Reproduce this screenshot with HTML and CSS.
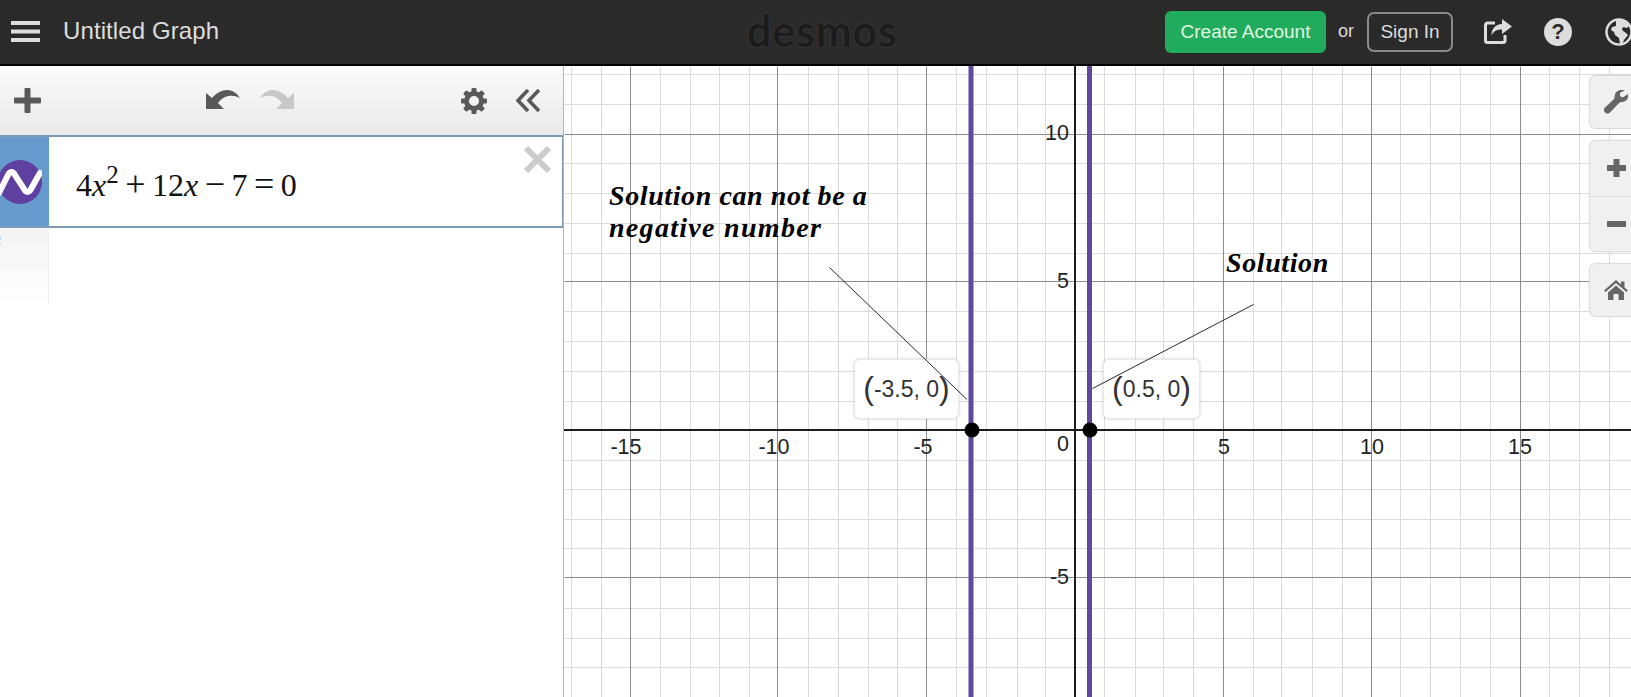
FILE: index.html
```html
<!DOCTYPE html>
<html lang="en">
<head>
<meta charset="utf-8">
<title>Untitled Graph - Desmos</title>
<link rel="stylesheet" href="styles.css">
</head>
<body>
<div class="page">
  <header class="topbar">
    <svg class="hamburger" viewBox="0 0 29 21"><path d="M0 0h29v4H0zM0 8.500h29v4H0zM0 17h29v4H0z"/></svg>
    <div class="title">Untitled Graph</div>
    <div class="logo">desmos</div>
    <div class="actions">
      <button class="create">Create Account</button>
      <span class="or">or</span>
      <button class="signin">Sign In</button>
      <svg class="share" viewBox="0 0 28 25"><path d="M21 16v5.500a2 2 0 0 1-2 2H3.500a2 2 0 0 1-2-2V6a2 2 0 0 1 2-2H11" fill="none" stroke="#ddd" stroke-width="3"/><path d="M18 0l10 7.500-10 7.500v-4.500c-5 0-8 1-10.500 6 0-7 4-11 10.500-11.500z" fill="#ddd"/></svg>
      <div class="help">?</div>
      <svg class="globe" viewBox="0 0 28 28"><circle cx="14" cy="14" r="12.500" fill="#2a2a2a" stroke="#ddd" stroke-width="2.500"/><path d="M11 2l9 0 5 5-3 3-4-1-1 3 4 3 2 2-4 5-2 5-2-1-1-6-4-3-1-3-3-2 1-3 4-1z" fill="#ddd"/></svg>
    </div>
  </header>
  <main class="workspace">
    <aside class="sidebar">
      <div class="toolbar">
        <svg class="ico-plus" viewBox="0 0 27 25"><path d="M10.500 1a1 1 0 0 1 1-1h4a1 1 0 0 1 1 1v8.500H26a1 1 0 0 1 1 1v4a1 1 0 0 1-1 1h-9.500V24a1 1 0 0 1-1 1h-4a1 1 0 0 1-1-1v-8.500H1a1 1 0 0 1-1-1v-4a1 1 0 0 1 1-1h9.500z"/></svg>
        <svg class="ico-undo" viewBox="0 0 34 21"><path d="M0 21V5l6 5C14 1 26 -2 34 10 26 6 18 7 12 15l6 6z"/></svg>
        <svg class="ico-redo" viewBox="0 0 34 21"><path d="M34 21V5l-6 5C20 1 8 -2 0 10 8 6 16 7 22 15l-6 6z"/></svg>
        <svg class="ico-gear" viewBox="-13 -13 26 26"><circle r="7.500" fill="none" stroke="#595959" stroke-width="5"/><g fill="#595959"><rect x="-2.500" y="-13" width="5" height="5" rx="1"/><rect x="-2.500" y="8" width="5" height="5" rx="1"/><rect x="-13" y="-2.500" width="5" height="5" rx="1"/><rect x="8" y="-2.500" width="5" height="5" rx="1"/><rect x="-2.500" y="-13" width="5" height="5" rx="1" transform="rotate(45)"/><rect x="-2.500" y="-13" width="5" height="5" rx="1" transform="rotate(135)"/><rect x="-2.500" y="-13" width="5" height="5" rx="1" transform="rotate(225)"/><rect x="-2.500" y="-13" width="5" height="5" rx="1" transform="rotate(315)"/></g></svg>
        <svg class="ico-hide" viewBox="0 0 25 25"><path d="M12 2L2 12.500 12 23M23 2L13 12.500 23 23" fill="none" stroke="#595959" stroke-width="3.600"/></svg>
      </div>
      <div class="expr">
        <div class="expr-tab">
          <svg class="wave" viewBox="0 0 44 44"><circle cx="22" cy="22" r="22" fill="#5f3f9f"/><path d="M1 33L10 15C12 11 15 11 17 15L26 29C28 33 31 33 33 29L42 13" fill="none" stroke="#fff" stroke-width="6" stroke-linecap="round"/></svg>
        </div>
        <div class="math"><span>4</span><i>x</i><sup>2</sup><span class="op">+</span><span>12</span><i>x</i><span class="op">−</span><span>7</span><span class="op">=</span><span>0</span></div>
        <svg class="remove" viewBox="0 0 29 29"><path d="M3 3l23 23M26 3L3 26" fill="none" stroke="#ccc" stroke-width="6"/></svg>
      </div>
      <div class="gutter"><span class="num">2</span></div>
    </aside>
    <section class="graph">
      <svg class="plane" viewBox="564 66 1067 631">
        <g transform="translate(0.500 0.500)">
          <path class="minor" d="M571 66V697M601 66V697M660 66V697M690 66V697M719 66V697M749 66V697M808 66V697M838 66V697M868 66V697M897 66V697M956 66V697M986 66V697M1017 66V697M1045 66V697M1104 66V697M1135 66V697M1163 66V697M1193 66V697M1253 66V697M1281 66V697M1312 66V697M1342 66V697M1400 66V697M1430 66V697M1460 66V697M1490 66V697M1549 66V697M1579 66V697M1609 66V697"/>
          <path class="minor" d="M564 74H1631M564 104H1631M564 163H1631M564 193H1631M564 223H1631M564 253H1631M564 311H1631M564 341H1631M564 371H1631M564 401H1631M564 460H1631M564 489H1631M564 519H1631M564 548H1631M564 608H1631M564 638H1631M564 667H1631"/>
          <path class="major" d="M630 66V697M777 66V697M926 66V697M1223 66V697M1371 66V697M1520 66V697M564 134H1631M564 281H1631M564 577H1631"/>
        </g>
        <path class="axis" d="M564 430H1631M1075 66V697"/>
        <g class="ticks">
          <text x="626" y="454" text-anchor="middle">-15</text>
          <text x="774" y="454" text-anchor="middle">-10</text>
          <text x="923" y="454" text-anchor="middle">-5</text>
          <text x="1224" y="454" text-anchor="middle">5</text>
          <text x="1372" y="454" text-anchor="middle">10</text>
          <text x="1520" y="454" text-anchor="middle">15</text>
          <text x="1069" y="451" text-anchor="end">0</text>
          <text x="1069" y="288" text-anchor="end">5</text>
          <text x="1069" y="140" text-anchor="end">10</text>
          <text x="1069" y="584" text-anchor="end">-5</text>
        </g>
        <path class="curve" d="M971 66V697M1089.500 66V697"/>
        <circle class="dot" cx="972" cy="430" r="7.500"/>
        <circle class="dot" cx="1090" cy="430" r="7.500"/>
        <text class="note" x="609" y="205">Solution can not be a</text>
        <text class="note note-wide" x="609" y="237">negative number</text>
        <text class="note" x="1226" y="272">Solution</text>
      </svg>
      <div class="tip tip-a"><span class="paren">(</span>-3.5, 0<span class="paren">)</span></div>
      <div class="tip tip-b"><span class="paren">(</span>0.5, 0<span class="paren">)</span></div>
      <svg class="pointers" viewBox="564 66 1067 631"><path d="M829.500 267.500L967 399.500M1092.500 388.500L1253.500 304.500"/></svg>
      <div class="tools">
        <div class="tool-box tool-one">
          <svg class="t-ico" viewBox="0 0 24 24"><path d="M24 4l-5.500 3.500L16 6l0-3 5-3C16 -1 11 1 10.500 6.500c0 1.500 0 2-1 3L1 17.500c-1.500 1.500-1.500 3.500 0 5s3.500 1.500 5 0l8.500-9c1-1 1.500-1 3-1.500C22 12 25 9 24 4z"/></svg>
        </div>
        <div class="tool-box tool-zoom">
          <div class="tool-half"><svg class="t-ico" viewBox="0 0 19 18"><path d="M6.500 0h6v6H19v6h-6.500v6h-6v-6H0V6h6.500z"/></svg></div>
          <div class="tool-half"><svg class="t-ico" viewBox="0 0 19 6"><path d="M0 0h19v6H0z"/></svg></div>
        </div>
        <div class="tool-box tool-one">
          <svg class="t-ico" viewBox="0 0 24 20"><path d="M12 0l5 4.500V1.500h3.500v6L24 10.500l-1.500 1.500L12 3 1.500 12 0 10.500zM4 12.500L12 5.500l8 7V20h-5.500v-6h-5v6H4z"/></svg>
        </div>
      </div>
    </section>
  </main>
</div>
</body>
</html>
```
FILE: styles.css
```css
* { box-sizing: border-box; }
html, body { margin: 0; padding: 0; background: #fff; }
.page { width: 1631px; height: 697px; overflow: hidden; display: flex; flex-direction: column; font-family: "Liberation Sans", Arial, sans-serif; }

/* top bar */
.topbar { height: 66px; flex: none; background: #2a2a2a; border-bottom: 2px solid #000; display: flex; align-items: center; padding-left: 11px; position: relative; }
.hamburger { width: 29px; height: 21px; fill: #ddd; flex: none; margin-top: -2px; }
.title { margin-left: 23px; font-size: 24px; letter-spacing: 0.100px; color: #ddd; margin-top: -3px; }
.logo { position: absolute; left: 747px; top: 3px; font-family: "Lato", sans-serif; font-weight: 700; font-size: 43px; line-height: 56px; letter-spacing: 0.800px; color: #1c1c1c; text-shadow: 0 0 2px #4c4c4c; }
.actions { margin-left: auto; display: flex; align-items: center; gap: 0; margin-top: -1px; }
.create { width: 161px; height: 42px; margin: 0; padding: 0; background: #21ab5c; border: 0; border-radius: 6px; color: #e0f7e4; font: 19px "Liberation Sans", Arial, sans-serif; }
.or { margin-left: 12px; width: 29px; color: #ddd; font-size: 18px; }
.signin { width: 86px; height: 40px; margin: 0; padding: 0; background: transparent; border: 2px solid #8a8a8a; border-radius: 7px; color: #ddd; font: 19px "Liberation Sans", Arial, sans-serif; }
.share { width: 28px; height: 25px; margin-left: 31px; }
.help { width: 28px; height: 28px; margin-left: 32px; border-radius: 50%; background: #ddd; color: #2a2a2a; font-weight: bold; font-size: 22px; line-height: 28px; text-align: center; }
.globe { width: 28px; height: 28px; margin-left: 33px; margin-right: -2px; flex: none; }

/* work area */
.workspace { flex: 1; display: flex; min-height: 0; }
.sidebar { width: 564px; flex: none; border-right: 1px solid #b5b5b5; overflow: hidden; display: flex; flex-direction: column; }
.toolbar { height: 69px; flex: none; background: linear-gradient(#fbfbfb, #e9e9e9); display: flex; align-items: center; padding: 0 22px 0 14px; }
.toolbar svg { fill: #595959; flex: none; }
.ico-plus { width: 27px; height: 25px; }
.ico-undo { width: 34px; height: 21px; margin-left: 165px; margin-top: -4px; }
.ico-redo { width: 34px; height: 21px; margin-left: 20px; margin-top: -4px; }
.toolbar .ico-redo { fill: #c8c8c8; }
.ico-gear { width: 26px; height: 26px; margin-left: auto; }
.ico-hide { width: 25px; height: 25px; margin-left: 29px; }

.expr { height: 93px; flex: none; display: flex; align-items: stretch; border-top: 2px solid #7c9ab4; border-bottom: 2px solid #7c9ab4; border-right: 1px solid #7c9ab4; }
.expr-tab { width: 49px; flex: none; background: #6699cc; display: flex; align-items: center; }
.wave { width: 44px; height: 44px; margin-left: -2px; flex: none; }
.math { margin-left: 27px; margin-top: 27px; font-family: "Liberation Serif", serif; font-size: 32px; line-height: 40px; color: #111; white-space: nowrap; }
.math sup { font-size: 25px; line-height: 0; vertical-align: 13px; }
.math .op { margin: 0 6.500px; font-size: 36px; font-weight: normal; }
.remove { width: 29px; height: 29px; margin-left: auto; margin-right: 10px; margin-top: 8px; flex: none; }
.gutter { width: 49px; height: 76px; flex: none; background: linear-gradient(#f3f3f3, #fff); border-right: 1px solid #eee; }
.num { display: block; margin-left: -6px; margin-top: 5px; font-size: 13px; line-height: 16px; color: #999; }

/* graph */
.graph { flex: 1; position: relative; min-width: 0; overflow: hidden; }
.plane { display: block; width: 100%; height: 100%; }
.minor { stroke: #dcdcdc; stroke-width: 1; fill: none; }
.major { stroke: #8c8c8c; stroke-width: 1; fill: none; }
.axis { stroke: #1c1c1c; stroke-width: 2; fill: none; }
.curve { stroke: #60489f; stroke-width: 5; fill: none; }
.dot { fill: #000; }
.pointers { position: absolute; left: 0; top: 0; width: 100%; height: 100%; pointer-events: none; }
.pointers path { stroke: #111; stroke-width: 0.900; fill: none; }
.ticks text { font-family: "Liberation Sans", Arial, sans-serif; font-size: 21.500px; fill: #222; }
.note { font-family: "Liberation Serif", serif; font-weight: bold; font-style: italic; font-size: 28px; letter-spacing: 0.600px; fill: #000; }
.note-wide { letter-spacing: 1.300px; }
.tip { position: absolute; top: 293px; height: 60px; display: flex; align-items: center; justify-content: center; background: #fff; border: 1px solid #e9e9e9; border-radius: 6px; box-shadow: 0 0 3px rgba(0, 0, 0, 0.220); font-size: 23px; color: #333; white-space: nowrap; }
.tip-a { left: 290px; width: 105px; }
.tip-b { left: 539px; width: 97px; }
.paren { font-size: 32px; line-height: 32px; font-weight: normal; margin-top: -3px; }
.tools { position: absolute; top: 9px; right: -12px; width: 54px; display: flex; flex-direction: column; gap: 11px; }
.tool-box { background: #f0f0f0; border: 1px solid #dcdcdc; border-radius: 7px; box-shadow: 0 0 2px rgba(0, 0, 0, 0.100); display: flex; flex-direction: column; }
.tool-one { height: 54px; align-items: flex-start; justify-content: center; padding-left: 14px; }
.tool-zoom { height: 112px; }
.tool-half { flex: 1; display: flex; align-items: center; padding-left: 17px; }
.tool-half + .tool-half { border-top: 1px solid #dcdcdc; }
.t-ico { fill: #666; width: 24px; height: 24px; }
.tool-half .t-ico { width: 19px; height: 18px; }
.tool-half + .tool-half .t-ico { height: 6px; }
.tool-one:last-child .t-ico { height: 20px; }
```
